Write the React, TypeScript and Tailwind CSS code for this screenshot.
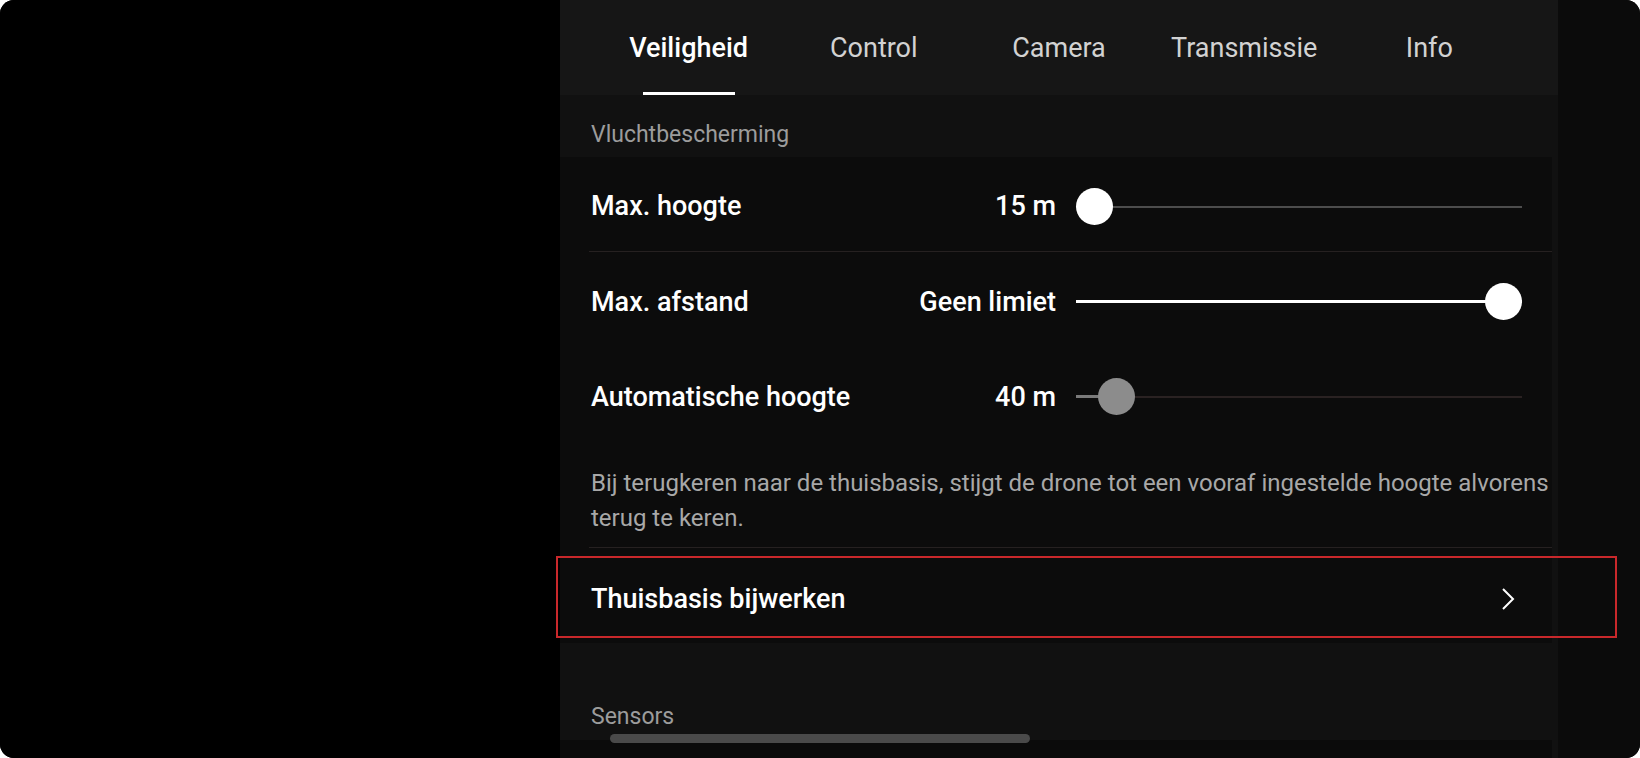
import React from 'react';

const tabs = ['Veiligheid', 'Control', 'Camera', 'Transmissie', 'Info'];

function Slider({ variant }: { variant: 'min' | 'max' | 'disabled' }) {
  return (
    <div className="relative w-[446px] h-[38px] shrink-0">
      {variant === 'min' && (
        <>
          <div className="absolute left-0 right-0 top-[18px] h-[2px] bg-[#4d4d4d]" />
          <div className="absolute left-0 top-0 w-[37px] h-[37px] rounded-full bg-white" />
        </>
      )}
      {variant === 'max' && (
        <>
          <div className="absolute left-0 right-0 top-[17px] h-[3px] bg-white" />
          <div className="absolute right-0 top-0 w-[37px] h-[37px] rounded-full bg-white" />
        </>
      )}
      {variant === 'disabled' && (
        <>
          <div className="absolute left-0 right-0 top-[18px] h-[2px] bg-[#2a2222]" />
          <div className="absolute left-0 w-[40px] top-[17px] h-[3px] bg-[#7a7a7a]" />
          <div className="absolute left-[22px] top-0 w-[37px] h-[37px] rounded-full bg-[#8c8c8c]" />
        </>
      )}
    </div>
  );
}

function SliderRow({ label, value, variant, height }: { label: string; value: string; variant: 'min' | 'max' | 'disabled'; height: string }) {
  return (
    <div className={`flex items-center justify-between pt-[5px] pl-[2px] pr-[30px] ${height}`}>
      <span className="text-[27px] font-medium text-white">{label}</span>
      <div className="flex items-center gap-5">
        <span className="text-[27px] font-medium text-white">{value}</span>
        <Slider variant={variant} />
      </div>
    </div>
  );
}

export default function App() {
  return (
    <div className="w-[1640px] h-[758px] bg-white font-['Roboto',sans-serif] relative">
      <div className="flex h-full rounded-[14px] overflow-hidden bg-black">
        <div className="w-[560px] shrink-0 bg-black" />

        <div className="w-[998px] shrink-0 flex flex-col bg-[#111111] relative">
          {/* tabs */}
          <div className="h-[95px] shrink-0 grid grid-cols-5 px-9 pt-[2px] bg-[#161616]">
            {tabs.map((t, i) => (
              <div key={t} className="relative flex items-center justify-center">
                <span className={i === 0 ? 'text-[27px] font-medium text-white' : 'text-[27px] text-[#d2d2d2]'}>{t}</span>
                {i === 0 && <div className="absolute bottom-0 h-[3px] w-[92px] bg-white" />}
              </div>
            ))}
          </div>

          <div className="flex flex-col w-[992px]">
            <div className="h-[62px] flex items-end pl-[31px] pb-[7px]">
              <span className="text-[23px] leading-[30px] text-[#9c9c9c]">Vluchtbescherming</span>
            </div>

            <div className="bg-[#0c0c0c] pl-[29px]">
              <SliderRow label="Max. hoogte" value="15 m" variant="min" height="h-[94px]" />
              <div className="h-px bg-[#262121]" />
              <SliderRow label="Max. afstand" value="Geen limiet" variant="max" height="h-[95px]" />
              <SliderRow label="Automatische hoogte" value="40 m" variant="disabled" height="h-[95px]" />
              <div className="pt-[24px] pb-[11px] pl-[2px]">
                <p className="text-[24px] leading-[35px] text-[#a8a8a8] whitespace-nowrap">
                  Bij terugkeren naar de thuisbasis, stijgt de drone tot een vooraf ingestelde hoogte alvorens
                  <br />
                  terug te keren.
                </p>
              </div>
              <div className="h-px bg-[#262121]" />
              <div className="h-[95px] pt-[7px] flex items-center justify-between pl-[2px] pr-[30px]">
                <span className="text-[27px] font-medium text-white">Thuisbasis bijwerken</span>
                <svg width="14" height="22" viewBox="0 0 14 22" className="mr-[7px]">
                  <polyline points="2,1 12,11 2,21" fill="none" stroke="white" strokeWidth="2" />
                </svg>
              </div>
            </div>

            <div className="h-[97px] flex items-end pl-[31px] pb-[8px]">
              <span className="text-[23px] leading-[30px] text-[#9c9c9c]">Sensors</span>
            </div>
            <div className="h-[18px] bg-[#0b0b0b]" />
          </div>

          <div className="absolute left-[50px] top-[734px] w-[420px] h-[9px] rounded-full bg-[#4a4a4a]" />
        </div>

        <div className="flex-1 bg-[#0b0b0b]" />
      </div>

      <div className="absolute left-[556px] top-[556px] w-[1061px] h-[82px] border-2 border-[#c9282b]" />
    </div>
  );
}
